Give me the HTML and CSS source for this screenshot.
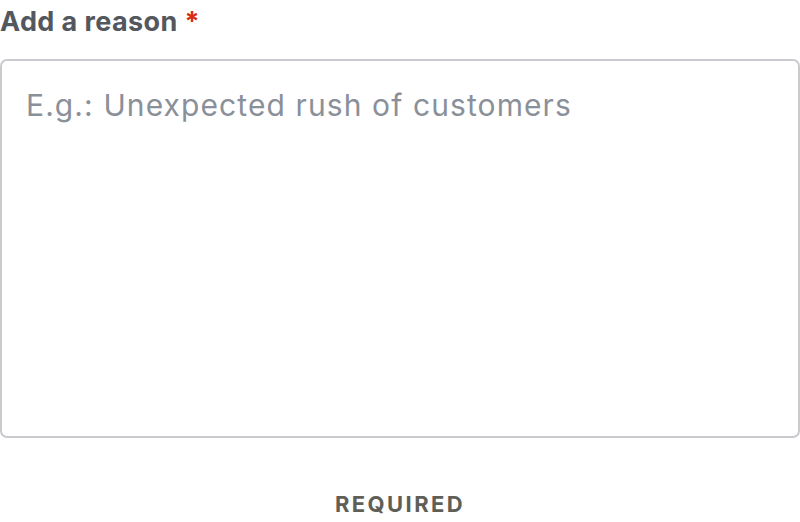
FILE: index.html
```html
<!DOCTYPE html>
<html lang="en">
<head>
<meta charset="utf-8">
<link rel="stylesheet" href="styles.css">
</head>
<body>
<div class="field">
  <label class="label" for="reason">Add a reason <span class="req">*</span></label>
  <textarea id="reason" class="input" placeholder="E.g.: Unexpected rush of customers"></textarea>
  <div class="hint">REQUIRED</div>
</div>
</body>
</html>
```
FILE: styles.css
```css
html, body { margin: 0; padding: 0; background: #fff; }
body { font-family: Inter, "Noto Sans", sans-serif; font-optical-sizing: none; font-variation-settings: "opsz" 14; width: 800px; height: 522px; overflow: hidden; }
.field { display: flex; flex-direction: column; }
.label { font-size: 27px; font-weight: 700; color: #53575e; line-height: 32px; margin-top: 6px; letter-spacing: 0.4px; }
.req { color: #d92d0f; }
.input {
  box-sizing: border-box;
  margin-top: 21px;
  width: 800px; height: 379px;
  border: 2px solid #cbcbcf; border-radius: 7px;
  padding: 24px 24px;
  font-family: Inter, "Noto Sans", sans-serif;
  font-optical-sizing: none; font-variation-settings: "opsz" 14;
  font-size: 30px; line-height: 40px; letter-spacing: 1.1px;
  resize: none; outline: none;
}
.input::placeholder { color: #8a9099; }
.hint { text-align: center; margin-top: 54px; font-size: 22px; font-weight: 700; letter-spacing: 2.4px; color: #5f5f57; line-height: 24px; }
```
